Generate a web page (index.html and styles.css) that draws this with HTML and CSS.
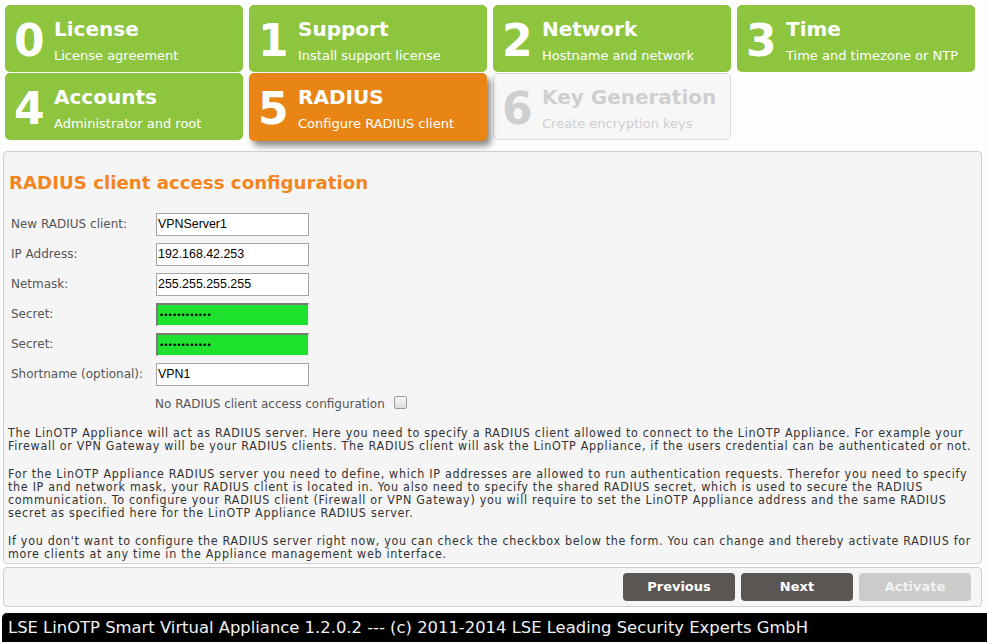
FILE: index.html
```html
<!DOCTYPE html>
<html>
<head>
<meta charset="utf-8">
<link rel="stylesheet" href="styles.css">
</head>
<body>
<div class="steps">
  <div class="tile done"><span class="num">0</span><div class="txt"><div class="title">License</div><div class="sub">License agreement</div></div></div>
  <div class="tile done"><span class="num">1</span><div class="txt"><div class="title">Support</div><div class="sub">Install support license</div></div></div>
  <div class="tile done"><span class="num">2</span><div class="txt"><div class="title">Network</div><div class="sub">Hostname and network</div></div></div>
  <div class="tile done"><span class="num">3</span><div class="txt"><div class="title">Time</div><div class="sub">Time and timezone or NTP</div></div></div>
  <div class="tile done"><span class="num">4</span><div class="txt"><div class="title">Accounts</div><div class="sub">Administrator and root</div></div></div>
  <div class="tile active"><span class="num">5</span><div class="txt"><div class="title">RADIUS</div><div class="sub">Configure RADIUS client</div></div></div>
  <div class="tile todo"><span class="num">6</span><div class="txt"><div class="title">Key Generation</div><div class="sub">Create encryption keys</div></div></div>
</div>

<div class="panel main">
  <h1 class="heading">RADIUS client access configuration</h1>
  <div class="form">
    <div class="row"><label class="lbl">New RADIUS client:</label><input class="field" type="text" value="VPNServer1"></div>
    <div class="row"><label class="lbl">IP Address:</label><input class="field" type="text" value="192.168.42.253"></div>
    <div class="row"><label class="lbl">Netmask:</label><input class="field" type="text" value="255.255.255.255"></div>
    <div class="row"><label class="lbl">Secret:</label><input class="field ok" type="password" value="xxxxxxxxxxxx"></div>
    <div class="row"><label class="lbl">Secret:</label><input class="field ok" type="password" value="xxxxxxxxxxxx"></div>
    <div class="row"><label class="lbl">Shortname (optional):</label><input class="field" type="text" value="VPN1"></div>
    <div class="checkrow"><span>No RADIUS client access configuration</span><span class="cb"></span></div>
  </div>
  <div class="info">
    <p>The LinOTP Appliance will act as RADIUS server. Here you need to specify a RADIUS client allowed to connect to the LinOTP Appliance. For example your Firewall or VPN Gateway will be your RADIUS clients. The RADIUS client will ask the LinOTP Appliance, if the users credential can be authenticated or not.</p>
    <p>For the LinOTP Appliance RADIUS server you need to define, which IP addresses are allowed to run authentication requests. Therefor you need to specify the IP and network mask, your RADIUS client is located in. You also need to specify the shared RADIUS secret, which is used to secure the RADIUS communication. To configure your RADIUS client (Firewall or VPN Gateway) you will require to set the LinOTP Appliance address and the same RADIUS secret as specified here for the LinOTP Appliance RADIUS server.</p>
    <p>If you don't want to configure the RADIUS server right now, you can check the checkbox below the form. You can change and thereby activate RADIUS for more clients at any time in the Appliance management web interface.</p>
  </div>
</div>

<div class="panel buttons">
  <button class="btn">Previous</button>
  <button class="btn">Next</button>
  <button class="btn disabled">Activate</button>
</div>

<div class="footer">LSE LinOTP Smart Virtual Appliance 1.2.0.2 --- (c) 2011-2014 LSE Leading Security Experts GmbH</div>
</body>
</html>
```

FILE: styles.css
```css
html, body {
  margin: 0;
  padding: 0;
  background: #fdfdfd;
  font-family: "DejaVu Sans", Verdana, sans-serif;
  width: 987px;
  height: 642px;
  overflow: hidden;
}

.steps {
  display: grid;
  grid-template-columns: repeat(4, 238px);
  grid-auto-rows: 67px;
  column-gap: 6px;
  row-gap: 1px;
  padding: 5px 0 0 5px;
}

.tile {
  display: flex;
  align-items: flex-start;
  border-radius: 5px;
  box-sizing: border-box;
  color: #fff;
}
.tile.done { background: #8dc53f; }
.tile.active {
  background: #e88514;
  box-shadow: 4px 5px 6px rgba(0,0,0,0.45);
  position: relative;
  z-index: 1;
  height: 68px;
}
.tile.todo {
  background: #f7f7f7;
  border: 1px solid #dadada;
  color: #cfcfcf;
}

.num {
  font-weight: bold;
  font-size: 44px;
  line-height: 44px;
  width: 40px;
  margin: 14px 0 0 9px;
  flex: none;
}
.todo .num { margin: 13px 0 0 8px; }
.txt { padding-top: 11px; }
.todo .txt { padding-top: 10px; }
.title {
  font-weight: bold;
  font-size: 20px;
  line-height: 26px;
}
.sub {
  font-size: 13px;
  line-height: 16px;
  margin-top: 6px;
}

.panel {
  background: #f5f5f5;
  border: 1px solid #cfcfcf;
  border-radius: 4px;
  width: 979px;
  box-sizing: border-box;
  margin-left: 3px;
}
.main {
  margin-top: 11px;
  height: 413px;
  padding: 0 4px;
  overflow: hidden;
}

.heading {
  color: #f3851f;
  font-size: 18.2px;
  font-weight: bold;
  margin: 20px 0 15px 1px;
  line-height: 22px;
}

.form { padding-left: 3px; }
.row {
  display: flex;
  align-items: center;
  height: 30px;
}
.lbl {
  width: 145px;
  font-size: 12px;
  color: #555;
  flex: none;
}
.field {
  width: 153px;
  height: 23px;
  box-sizing: border-box;
  border: 1px solid #a5a5a5;
  background: #fff;
  font-family: "Liberation Sans", Arial, sans-serif;
  font-size: 12.4px;
  padding: 0 1px;
  margin: 0;
  color: #000;
}
.field.ok {
  background: #1ee22e;
  border-top: 2px solid #7a7a7a;
  border-left: 2px solid #7a7a7a;
  border-right: 1px solid #eee;
  border-bottom: 1px solid #eee;
  font-family: "DejaVu Sans", sans-serif;
  font-size: 9px;
  letter-spacing: -1px;
}

.checkrow {
  display: flex;
  align-items: center;
  height: 20px;
  margin: 5px 0 0 144px;
  font-size: 12px;
  color: #555;
}
.cb {
  width: 11px;
  height: 11px;
  border: 1px solid #999;
  border-radius: 2px;
  background: linear-gradient(#fafafa, #dcdcdc);
  margin-left: 9px;
  margin-top: -4px;
}

.info {
  margin-top: 12px;
  font-family: "DejaVu Sans Condensed", "DejaVu Sans", sans-serif;
  font-size: 12.4px;
  letter-spacing: 0.7px;
  line-height: 13px;
  color: #333;
}
.info p { margin: 0 0 15px 0; }

.buttons {
  margin-top: 3px;
  height: 40px;
  display: flex;
  justify-content: flex-end;
  align-items: center;
  gap: 6px;
  padding-right: 10px;
  padding-bottom: 1px;
}
.btn {
  width: 112px;
  height: 28px;
  border: none;
  border-radius: 4px;
  background: #5a5654;
  color: #fff;
  font-family: "DejaVu Sans", sans-serif;
  font-weight: bold;
  font-size: 13px;
  padding: 0;
}
.btn.disabled {
  background: #cbcbcb;
  color: #f2f2f2;
}

.footer {
  margin: 6px 0 0 2px;
  height: 30px;
  background: #000;
  color: #f0f0f0;
  border-top-left-radius: 5px;
  font-size: 16.4px;
  line-height: 30px;
  padding-left: 6px;
}
```
